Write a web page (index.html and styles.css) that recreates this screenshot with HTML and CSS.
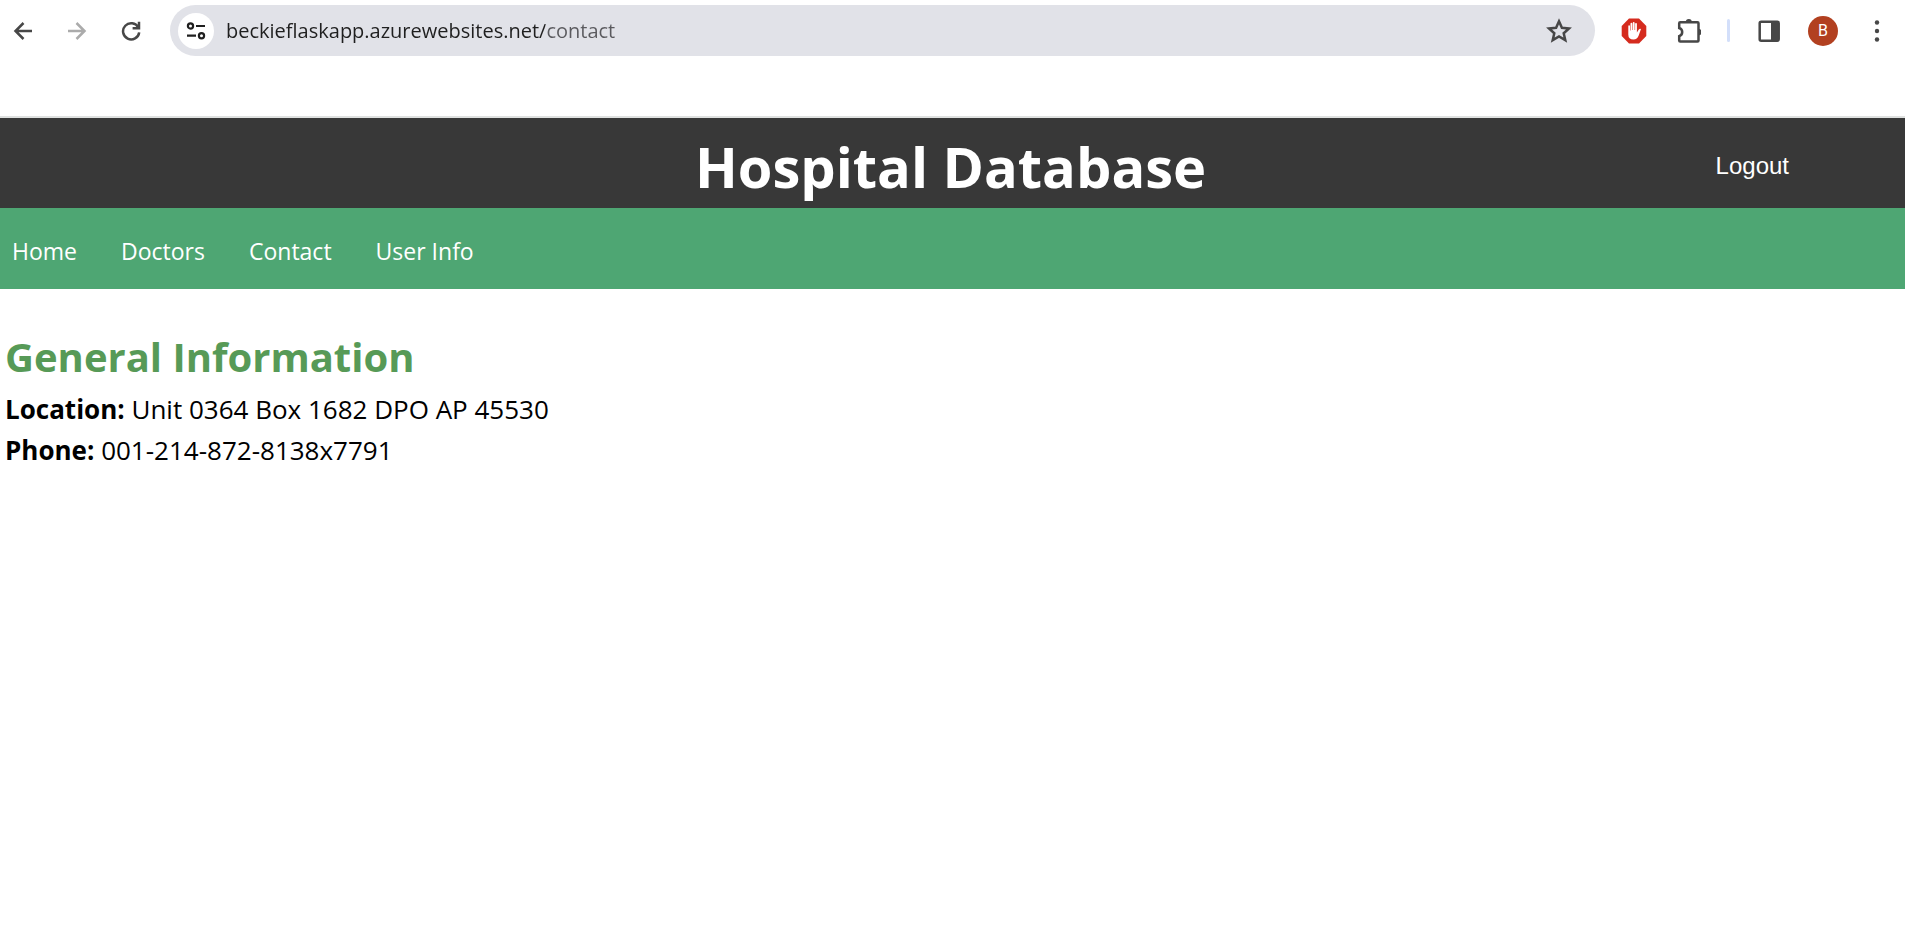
FILE: index.html
```html
<!DOCTYPE html>
<html lang="en">
<head>
<meta charset="utf-8">
<title>Hospital Database</title>
<link rel="stylesheet" href="styles.css">
</head>
<body>
<div class="toolbar">
  <div class="nav-buttons">
    <button class="tool" type="button" aria-label="Back">
      <svg width="20" height="20" viewBox="0 0 20 20"><path class="line" d="M19 10H2.500M10.500 2L2.500 10L10.500 18"/></svg>
    </button>
    <button class="tool tool-off" type="button" aria-label="Forward" disabled>
      <svg width="20" height="20" viewBox="0 0 20 20"><path class="line" d="M1 10H17.500M9.500 2L17.500 10L9.500 18"/></svg>
    </button>
    <button class="tool" type="button" aria-label="Reload">
      <svg width="20" height="20" viewBox="0 0 20 20"><path class="line" d="M18.200 11.300A8.100 8.100 0 1 1 17.300 6.500M18 .8V7.200H11.600"/></svg>
    </button>
  </div>
  <div class="address">
    <button class="site-info" type="button" aria-label="View site information">
      <svg width="20" height="18" viewBox="0 0 20 18"><g fill="none" stroke="#1f1f1f" stroke-width="2.200"><circle cx="4.500" cy="4" r="2.600"/><circle cx="15.500" cy="13.700" r="2.600"/><path d="M10 4H19M1 13.700H10"/></g></svg>
    </button>
    <input class="url" type="text" aria-label="Address" value="beckieflaskapp.azurewebsites.net/contact">
    <button class="tool" type="button" aria-label="Bookmark this page">
      <svg width="26" height="26" viewBox="0 0 26 26"><path class="line" d="M13 3.300L15.900 9.800L23 10.500L17.700 15.300L19.300 22.200L13 18.500L6.700 22.200L8.300 15.300L3 10.500L10.100 9.800Z"/></svg>
    </button>
  </div>
  <div class="extensions">
    <button class="tool" type="button" aria-label="Ad blocker">
      <svg width="26" height="26" viewBox="0 0 26 26"><path fill="#d52b1e" d="M8 .5H18L25.300 8V18L18 25.500H8L.7 18V8Z"/><path fill="#fff" d="M7.300 8.300Q7.300 7.300 8.100 7.300Q9 7.300 9 8.300V12.500H9.500V5.800Q9.500 4.800 10.400 4.800Q11.300 4.800 11.300 5.800V12H11.800V4.800Q11.800 3.900 12.700 3.900Q13.600 3.900 13.600 4.800V12H14.100V5.800Q14.100 4.900 15 4.900Q15.900 4.900 15.900 5.800V14.500L17.800 11.500Q18.700 10.300 20 11L17.700 17.500Q16.300 21.500 12.500 21.500Q7.300 21.500 7.300 16.500Z"/></svg>
    </button>
    <button class="tool" type="button" aria-label="Extensions">
      <svg width="26" height="26" viewBox="-2 -1 26 26"><path class="line" d="M3.200 3.200H20.500Q21.500 3.200 21.500 4.200V21.500Q21.500 22.500 20.500 22.500H3.200Q2.200 22.500 2.200 21.500V17.200Q5.200 16.300 5.200 13.100Q5.200 9.900 2.200 9V4.200Q2.200 3.200 3.200 3.200Z"/><path class="solid" d="M8.800 3A3 3 0 0 1 14.800 3ZM22 9.900A2.500 3.200 0 0 1 22 16.300Z"/></svg>
    </button>
    <span class="divider"></span>
    <button class="tool" type="button" aria-label="Side panel">
      <svg width="22" height="22" viewBox="0 0 22 22"><rect class="line" x="1.700" y="1.700" width="19" height="19" rx="1.500"/><path class="solid" d="M13 1.500H20.500V20.500H13Z"/></svg>
    </button>
    <button class="tool" type="button" aria-label="Profile"><span class="avatar">B</span></button>
    <button class="tool" type="button" aria-label="Menu">
      <svg width="6" height="22" viewBox="0 0 6 22"><g class="solid"><circle cx="3" cy="2.500" r="2.200"/><circle cx="3" cy="11" r="2.200"/><circle cx="3" cy="19.500" r="2.200"/></g></svg>
    </button>
  </div>
</div>
<header class="banner">
  <h1 class="title">Hospital Database</h1>
  <a class="logout" href="#">Logout</a>
</header>
<nav class="menu">
  <a href="#">Home</a>
  <a href="#">Doctors</a>
  <a href="#">Contact</a>
  <a href="#">User Info</a>
</nav>
<main class="content">
  <h2 class="heading">General Information</h2>
  <p class="detail"><strong>Location:</strong> Unit 0364 Box 1682 DPO AP 45530</p>
  <p class="detail"><strong>Phone:</strong> 001-214-872-8138x7791</p>
</main>
</body>
</html>
```
FILE: styles.css
```css
* { box-sizing: border-box; }
body {
  margin: 0;
  background: #fff;
  color: #000;
  font-family: "Segoe UI", "Open Sans", "Noto Sans", sans-serif;
}
button { border: 0; padding: 0; background: none; font: inherit; }
a { color: inherit; text-decoration: none; }
svg { display: block; }

.toolbar {
  display: flex;
  align-items: center;
  gap: 19px;
  padding: 5px 8px 60px 3px;
  border-bottom: 2px solid #dfe1e0;
}
.nav-buttons, .extensions { display: flex; align-items: center; gap: 14px; }
.tool {
  display: flex;
  align-items: center;
  justify-content: center;
  width: 40px;
  height: 40px;
  color: #474747;
}
.tool-off { color: #ababab; }
.line { fill: none; stroke: currentColor; stroke-width: 2.5; }
.solid { fill: currentColor; }

.address {
  display: flex;
  flex: 1;
  align-items: center;
  height: 51px;
  padding: 0 16px 0 8px;
  border-radius: 26px;
  background: #e1e2e8;
}
.site-info {
  display: flex;
  align-items: center;
  justify-content: center;
  width: 36px;
  height: 36px;
  border-radius: 50%;
  background: #fff;
}
.url {
  flex: 1;
  min-width: 0;
  height: 40px;
  margin-left: 12px;
  padding: 0;
  border: 0;
  font: 20px "Segoe UI", "Open Sans", sans-serif;
  color: transparent;
  background: linear-gradient(90deg, #1f1f1f 319px, #5a5a5e 319px);
  background-clip: text;
  -webkit-background-clip: text;
}
.divider { width: 3px; height: 23px; margin: 0 5px; border-radius: 2px; background: #d3dffa; }
.avatar {
  width: 30px;
  height: 30px;
  border-radius: 50%;
  background: #b24020;
  color: #fff;
  font: 16px/30px Roboto, sans-serif;
}

.banner {
  display: grid;
  grid-template-columns: 1fr auto 1fr;
  align-items: center;
  height: 90px;
  padding: 6px 4px 0 0;
  background: #383838;
  color: #fff;
}
.title { grid-column: 2; margin: 0; font-size: 56px; line-height: 84px; }
.logout {
  justify-self: end;
  margin-right: 112px;
  font: 24px/30px "Liberation Sans", Arial, sans-serif;
}
.menu {
  display: flex;
  align-items: center;
  gap: 44px;
  height: 81px;
  padding: 4px 12px 0;
  background: #4ea673;
  color: #fff;
  font-size: 23px;
}
.content { padding: 44px 5px; }
.heading { margin: 0 0 8px; color: #579a57; font-size: 40px; line-height: 48px; }
.detail { margin: 0; font-size: 26px; line-height: 41px; }
```
